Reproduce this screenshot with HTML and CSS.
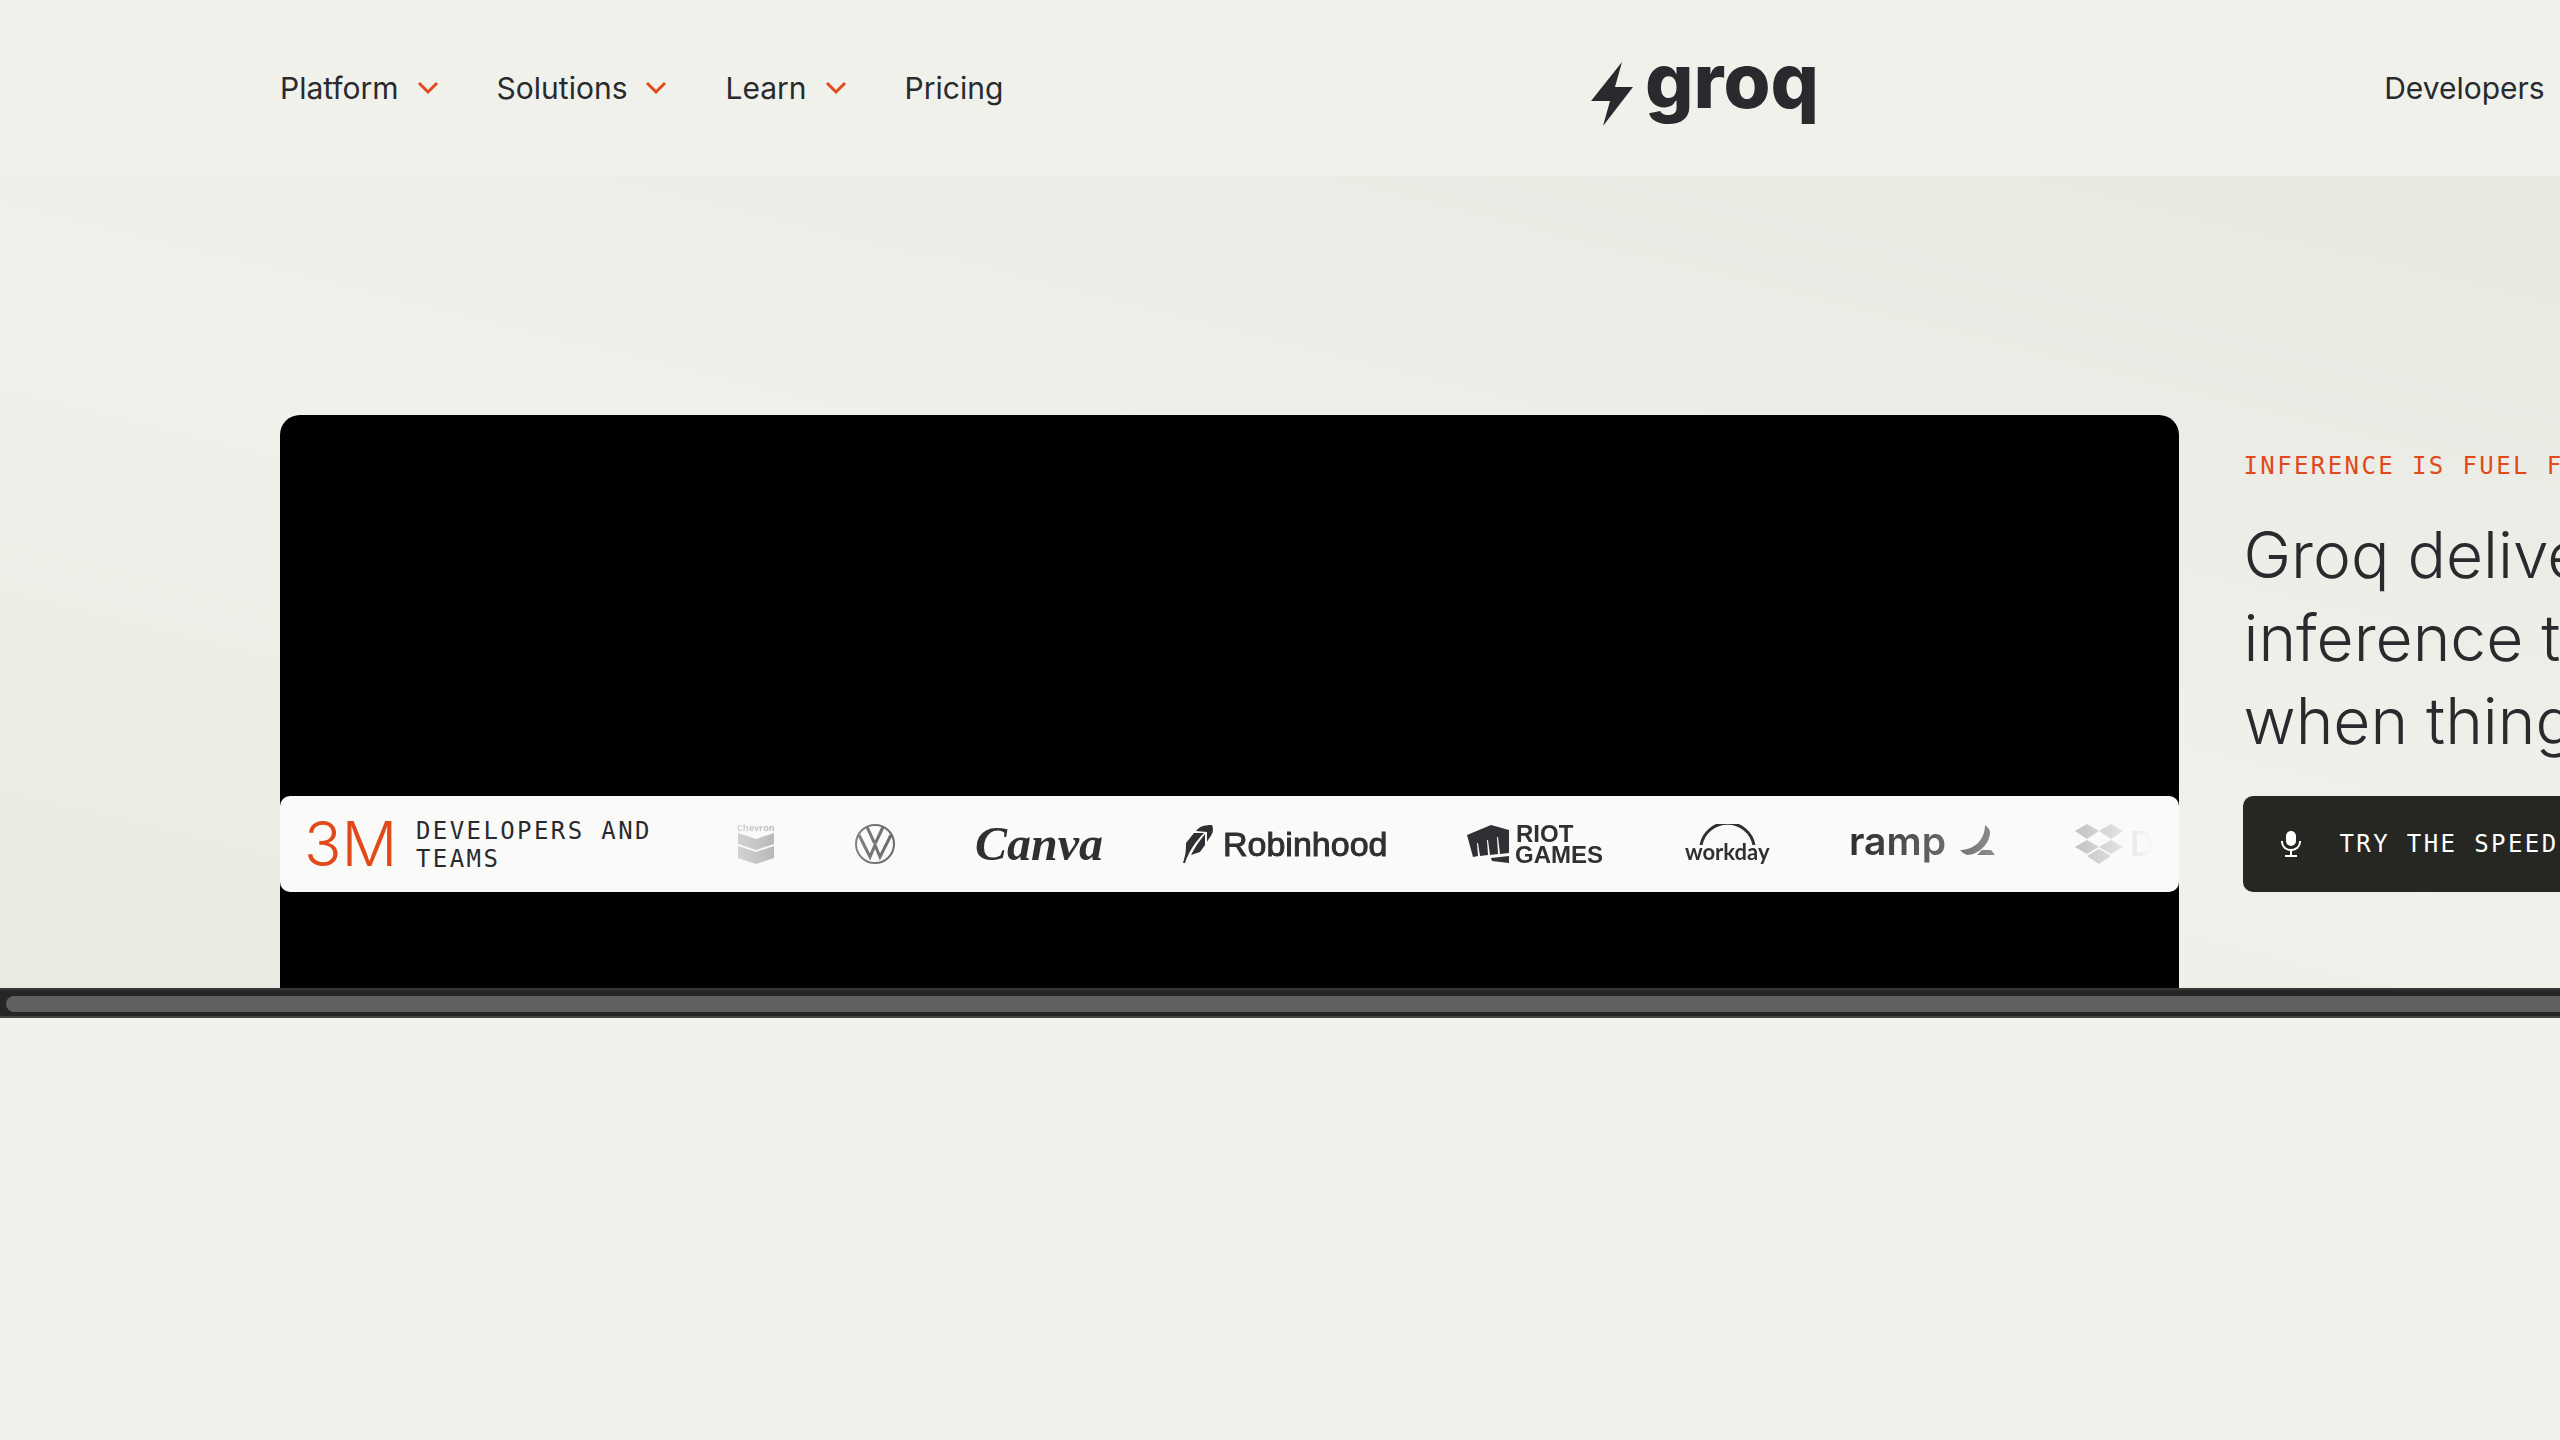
FILE: index.html
```html
<!DOCTYPE html>
<html lang="en">
<head>
<meta charset="utf-8">
<title>Groq</title>
<link rel="stylesheet" href="styles.css">
</head>
<body>
<div class="viewport">
  <div class="canvas">
    <header class="header">
      <nav class="nav" aria-label="Main">
        <button class="nav-item" type="button">Platform <svg class="caret" viewBox="0 0 22 14" aria-hidden="true"><path d="M2 2l9 9 9-9"/></svg></button>
        <button class="nav-item" type="button">Solutions <svg class="caret" viewBox="0 0 22 14" aria-hidden="true"><path d="M2 2l9 9 9-9"/></svg></button>
        <button class="nav-item" type="button">Learn <svg class="caret" viewBox="0 0 22 14" aria-hidden="true"><path d="M2 2l9 9 9-9"/></svg></button>
        <a class="nav-item" href="#pricing">Pricing</a>
      </nav>
      <a class="brand" href="#home" aria-label="Groq home">
        <svg class="brand-bolt" viewBox="0 0 42 64" aria-hidden="true"><path d="M31 0L0 39h19l-7 25L42 25H24z"/></svg>
        <span class="brand-name">groq</span>
      </a>
      <nav class="nav nav-end" aria-label="Resources">
        <button class="nav-item" type="button">Developers <svg class="caret" viewBox="0 0 22 14" aria-hidden="true"><path d="M2 2l9 9 9-9"/></svg></button>
      </nav>
    </header>
    <main class="hero">
      <section class="stage">
        <div class="trust">
          <p class="count">3M</p>
          <p class="count-label">Developers and<br>Teams</p>
          <div class="logos">
            <svg class="logo" width="38" height="40" viewBox="0 0 38 40" role="img" aria-label="Chevron">
              <text class="mark-chevron" x="0" y="7">Chevron</text>
              <path d="M1 9l18 6 18-6v11l-18 6-18-6z"/><path d="M1 22l18 6 18-6v12l-18 6-18-6z"/>
            </svg>
            <svg class="logo" width="40" height="40" viewBox="0 0 40 40" role="img" aria-label="Volkswagen">
              <circle class="line" cx="20" cy="20" r="19"/>
              <path class="line thick" d="M12 3l7 15h2l7-15M4 11l11 22 5-12 5 12 11-22"/>
            </svg>
            <svg class="logo" width="128" height="40" viewBox="0 0 128 40" role="img" aria-label="Canva"><text class="mark-canva" x="0" y="36">Canva</text></svg>
            <svg class="logo" width="204" height="40" viewBox="0 0 204 40" role="img" aria-label="Robinhood">
              <path d="M13 7C16 3 20 1 29 1c2 5 1 9-4 15l-1 2V8z"/>
              <path d="M0 39C2 32 3 29 3 19L11 9h10C13 17 6 27 2 39z"/>
              <path d="M22 10v11l-5 7-9 3C12 23 17 16 22 10z"/>
              <text class="mark-robinhood" x="40" y="32">Robinhood</text>
            </svg>
            <svg class="logo" width="138" height="40" viewBox="0 0 138 40" role="img" aria-label="Riot Games">
              <path d="M0 11L24 1l18 5v23l-9 1-2-17h-1l1 17-8 1-2-15h-1l1 15-8 1-2-13h-1l1 13-5 1z"/>
              <path d="M24 34l18-2v7l-17-2z"/>
              <text class="mark-riot" x="49" y="18">RIOT</text><text class="mark-riot" x="48" y="39">GAMES</text>
            </svg>
            <svg class="logo" width="84" height="40" viewBox="0 0 84 40" role="img" aria-label="Workday">
              <path class="line thick" d="M16 21a27 27 0 0 1 53 0"/>
              <text class="mark-workday" x="0" y="36">workday</text>
            </svg>
            <svg class="logo" width="146" height="40" viewBox="0 0 146 40" role="img" aria-label="Ramp">
              <text class="mark-ramp" x="0" y="31">ramp</text>
              <path d="M136 1q5 4 5 7c0 12-12 23-23 23q-4-1-7-5c14 0 25-10 25-25zM133 26h9l4 5h-18z"/>
            </svg>
            <svg class="logo" width="200" height="40" viewBox="0 0 200 40" role="img" aria-label="Dropbox">
              <path d="M12 0l12 7-12 8L0 7zM36 0l12 7-12 8-12-8zM12 16l12 7-12 7-12-7zM36 16l12 7-12 7-12-7zM24 25l12 7-12 8-12-8z"/>
              <text class="mark-dropbox" x="55" y="32">Dropbox</text>
            </svg>
          </div>
        </div>
      </section>
      <section class="pitch">
        <p class="eyebrow">Inference is fuel for AI</p>
        <h1 class="headline">Groq delivers fast, low cost<br>inference that doesn’t flake<br>when things get real.</h1>
        <button class="cta" type="button">
          <svg class="mic" viewBox="0 0 20 26" aria-hidden="true"><rect x="5" y="0" width="10" height="15" rx="5"/><path d="M1 10v1a9 8 0 0 0 18 0v-1M10 19v5M4 25h12"/></svg>
          Try the speed
        </button>
      </section>
    </main>
  </div>
  <div class="scrollbar" aria-hidden="true"><div class="thumb"></div></div>
</div>
</body>
</html>
```

FILE: styles.css
```css
* { box-sizing: border-box; }

body {
  margin: 0;
  background: #f0f1eb;
  color: #292a2e;
  font-family: Inter, "Liberation Sans", sans-serif;
}

p, h1 { margin: 0; }

button {
  margin: 0;
  padding: 0;
  border: 0;
  background: none;
  color: inherit;
  font: inherit;
}

a { color: inherit; text-decoration: none; }

.viewport { overflow: hidden; }

.canvas { width: 133.2vw; }

.header {
  display: grid;
  grid-template-columns: 1fr auto 1fr;
  align-items: center;
  height: 176px;
  padding: 0 280px;
}

.nav {
  display: flex;
  gap: 58px;
}

.nav-end {
  justify-content: center;
  padding-left: 20px;
}

.nav-item {
  display: flex;
  align-items: center;
  gap: 18px;
  font-size: 30px;
  line-height: 40px;
}

.caret {
  width: 22px;
  height: 14px;
  fill: none;
  stroke: #e1491b;
  stroke-width: 3;
}

.brand {
  display: flex;
  align-items: flex-start;
  gap: 12px;
  height: 72px;
}

.brand-bolt {
  width: 42px;
  height: 64px;
  margin-top: 10px;
  fill: #292a2e;
}

.brand-name {
  font: 800 76px/56px Inter, sans-serif;
}

.hero {
  display: grid;
  grid-template-columns: minmax(0, 15fr) minmax(0, 7fr);
  gap: 64px;
  padding: 239px 280px 0;
  background: linear-gradient(194deg, #e7e8e0 10%, #f0f1eb 58%, #e9eae1);
}

.stage {
  padding: 381px 0 96px;
  border-radius: 20px 20px 0 0;
  background: #000;
}

.trust {
  display: flex;
  align-items: center;
  height: 96px;
  padding: 0 24px;
  border-radius: 10px;
  background: #fafaf8;
}

.count {
  width: 112px;
  color: #e1491b;
  font-size: 62px;
  font-weight: 300;
  line-height: 96px;
}

.count-label,
.eyebrow,
.cta {
  font: 24px/28px "DejaVu Sans Mono", monospace;
  letter-spacing: 0.1em;
  text-transform: uppercase;
  white-space: nowrap;
}

.count-label {
  width: 264px;
  padding-top: 2px;
}

.logos {
  display: flex;
  flex: 1;
  gap: 80px;
  min-width: 0;
  padding-left: 57px;
  overflow: hidden;
  mask-image: linear-gradient(90deg, transparent, #000 20%, #000 80%, transparent);
}

.logo {
  flex: none;
  fill: #2f3034;
  overflow: visible;
}

.line {
  fill: none;
  stroke: #2f3034;
  stroke-width: 2;
}

.thick { stroke-width: 3; }

.mark-chevron { font: 700 9px "Open Sans", sans-serif; }
.mark-canva { font: italic 700 48px "Liberation Serif", serif; }
.mark-robinhood { font: 34px "Liberation Sans", sans-serif; stroke: #2f3034; }
.mark-riot { font: 700 24px "Liberation Sans", sans-serif; }
.mark-workday { font: 700 22px Lato, sans-serif; }
.mark-ramp { font: 600 39px Inter, sans-serif; }
.mark-dropbox { font: 600 34px Inter, sans-serif; }

.pitch {
  display: flex;
  flex-direction: column;
  padding-top: 34px;
}

.eyebrow {
  margin-bottom: 30px;
  color: #e1491b;
  line-height: 34px;
}

.headline {
  margin-bottom: 34px;
  font-size: 64px;
  font-weight: 300;
  line-height: 83px;
  white-space: nowrap;
}

.cta {
  display: flex;
  align-items: center;
  gap: 38px;
  height: 96px;
  padding: 0 38px;
  border-radius: 10px;
  background: #262722;
  color: #fff;
}

.mic {
  width: 20px;
  height: 26px;
  fill: #fff;
}

.mic path {
  fill: none;
  stroke: #fff;
  stroke-width: 2;
}

.scrollbar {
  height: 30px;
  padding: 6px 0 6px 6px;
  border-top: 2px solid #383838;
  border-bottom: 2px solid #444;
  background: #262626;
}

.thumb {
  height: 16px;
  border-radius: 8px 0 0 8px;
  background: #606060;
}
```
